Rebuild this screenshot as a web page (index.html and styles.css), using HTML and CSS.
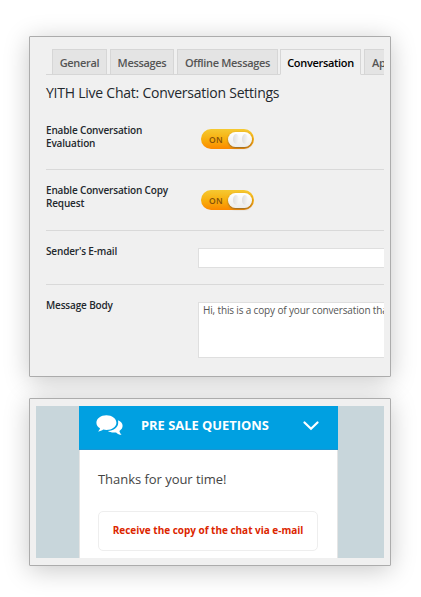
FILE: index.html
```html
<!DOCTYPE html>
<html lang="en">
<head>
<meta charset="utf-8">
<title>YITH Live Chat</title>
<link rel="stylesheet" href="styles.css">
</head>
<body>
<section class="panel settings">
  <nav class="tabs">
    <a class="tab general">General</a>
    <a class="tab messages">Messages</a>
    <a class="tab offline">Offline Messages</a>
    <a class="tab conversation active">Conversation</a>
    <a class="tab appearance">Ap</a>
  </nav>
  <h1>YITH Live Chat: Conversation Settings</h1>
  <div class="row row-evaluation">
    <div class="label">Enable Conversation<br>Evaluation</div>
    <div class="toggle"><span>ON</span><i class="knob"><b></b><b></b></i></div>
  </div>
  <div class="row row-copy">
    <div class="label">Enable Conversation Copy<br>Request</div>
    <div class="toggle"><span>ON</span><i class="knob"><b></b><b></b></i></div>
  </div>
  <div class="row row-sender">
    <div class="label">Sender's E-mail</div>
    <div class="field"></div>
  </div>
  <div class="row row-body">
    <div class="label">Message Body</div>
    <div class="field area">Hi, this is a copy of your conversation tha</div>
  </div>
</section>
<section class="panel preview">
  <div class="site">
    <div class="chat">
      <header class="chat-head">
        <svg class="bubbles" viewBox="0 0 27 21" width="27" height="21">
          <path fill="#fff" d="M10.4.3C4.8.3.4 3.5.4 7.7c0 2.3 1.4 4.3 3.6 5.6-.2 1.200-.9 2.200-2 3.200 2.100-.1 3.900-.9 5.300-2 1 .2 2 .4 3.100.4 5.600 0 10-3.200 10-7.200S16 .3 10.400.3z"/>
          <path fill="#fff" d="M21.900 5.300c3 1.100 4.700 3.200 4.700 5.500 0 2.100-1.200 3.900-3.200 5.100.3 1.500 1 2.700 2.200 3.900-2.200-.1-4.200-1-5.500-2.400-3.200.5-6.200 0-8.200-1.300 5.900-.4 10.300-3.900 10.300-8.400 0-.8-.1-1.600-.3-2.400z"/>
        </svg>
        <span class="title">PRE SALE QUETIONS</span>
        <svg class="chevron" viewBox="0 0 16 10" width="16" height="10"><path d="M1.500 1.500 8 7.800l6.500-6.300" fill="none" stroke="#fff" stroke-width="2.200" stroke-linecap="round"/></svg>
      </header>
      <div class="chat-body">
        <p>Thanks for your time!</p>
        <div class="button">Receive the copy of the chat via e-mail</div>
      </div>
    </div>
  </div>
</section>
</body>
</html>
```
FILE: styles.css
```css
* { box-sizing: border-box; }
body {
  margin: 0;
  padding: 36px 0 0 29px;
  height: 597px;
  overflow: hidden;
  background: #fff;
  font-family: "Open Sans", sans-serif;
}
.panel {
  width: 362px;
  background: #f0f0f0;
  border: 1px solid #acacac;
  border-radius: 1px;
  box-shadow: 0 4px 26px rgba(0, 0, 0, .22);
}
.settings {
  height: 341px;
  padding: 12px 6px 0 16px;
}
.tabs {
  display: flex;
  gap: 3px;
  height: 26px;
  padding-left: 6px;
  box-shadow: inset 0 -1px #d6d6d6;
}
.tab {
  flex: none;
  height: 26px;
  border: 1px solid #d6d6d6;
  background: #e4e4e4;
  color: #555;
  font-size: 11px;
  letter-spacing: -.32px;
  font-weight: 600;
  line-height: 25px;
  text-align: center;
  white-space: nowrap;
}
.general { width: 55px; }
.messages { width: 64px; }
.offline { width: 101px; }
.conversation { width: 81px; margin-left: -1px; }
.appearance {
  flex: 1;
  min-width: 0;
  padding-left: 7px;
  border-right: 0;
  overflow: hidden;
  text-align: left;
}
.active {
  background: #f0f0f0;
  border-bottom-color: #f0f0f0;
  color: #000;
}
h1 {
  margin: 0;
  height: 35px;
  font-size: 14px;
  letter-spacing: -.24px;
  font-weight: 400;
  line-height: 36px;
  color: #23282d;
  white-space: nowrap;
}
.row {
  display: grid;
  grid-template-columns: 152px minmax(0, 1fr);
  align-items: start;
  border-bottom: 1px solid #d9d9d9;
}
.row-evaluation { height: 60px; }
.row-copy { height: 61px; }
.row-sender { height: 54px; }
.row-body { height: 85px; border-bottom: 0; }
.label {
  padding-top: 14px;
  font-size: 10px;
  letter-spacing: -.16px;
  font-weight: 600;
  line-height: 13px;
  color: #23282d;
  white-space: nowrap;
}
.toggle {
  display: flex;
  align-items: center;
  justify-content: space-between;
  width: 53px;
  height: 20px;
  margin: 19px 0 0 3px;
  padding: 0 2px 0 8px;
  border-radius: 10px;
  background: linear-gradient(#f5c932, #f8ad0c 55%, #fb8900);
  font-size: 8.5px;
  letter-spacing: .3px;
  font-weight: 600;
  color: #85500a;
}
.row-copy .toggle { margin-top: 20px; }
.knob {
  display: flex;
  align-items: center;
  justify-content: center;
  gap: 3px;
  width: 24px;
  height: 15px;
  border-radius: 8px;
  background: linear-gradient(#fff, #ececec);
  box-shadow: 0 1px 2px #8a6a30;
}
.knob b {
  width: 6px;
  height: 10px;
  border-radius: 50%;
  background: linear-gradient(90deg, #dedede, #f6f6f6);
}
.field {
  height: 20px;
  margin-top: 17px;
  border: 1px solid #dfdfdf;
  border-right: 0;
  background: #fff;
}
.area {
  height: 56px;
  padding-left: 4px;
  overflow: hidden;
  font-size: 10px;
  letter-spacing: -.15px;
  line-height: 15px;
  color: #555;
  white-space: nowrap;
}
.preview {
  height: 168px;
  margin-top: 21px;
  padding: 7px 6px;
}
.site {
  display: flex;
  height: 152px;
  padding-left: 43px;
  background: #c8d6db;
}
.chat {
  width: 259px;
  height: 152px;
  background: #fff;
}
.chat-head {
  display: flex;
  align-items: center;
  height: 44px;
  padding: 0 19px 4px 17px;
  border-bottom: 1px solid #1995d2;
  background: #00a0e1;
}
.title {
  margin: -2px 0 0 18px;
  font-size: 12.9px;
  font-weight: 700;
  color: #fff;
  white-space: nowrap;
}
.chevron { margin-left: auto; }
.chat-body {
  height: 108px;
  padding: 19px 19px 0 18px;
  border: solid #e5e5e5;
  border-width: 0 1px;
}
p {
  margin: 0;
  font-size: 13px;
  letter-spacing: -.04px;
  line-height: 20px;
  color: #444;
  white-space: nowrap;
}
.button {
  height: 40px;
  margin-top: 22px;
  border: 1px solid #eee;
  border-radius: 5px;
  font-size: 10px;
  letter-spacing: -.02px;
  font-weight: 700;
  line-height: 37px;
  text-align: center;
  color: #dc2600;
  white-space: nowrap;
}
```
